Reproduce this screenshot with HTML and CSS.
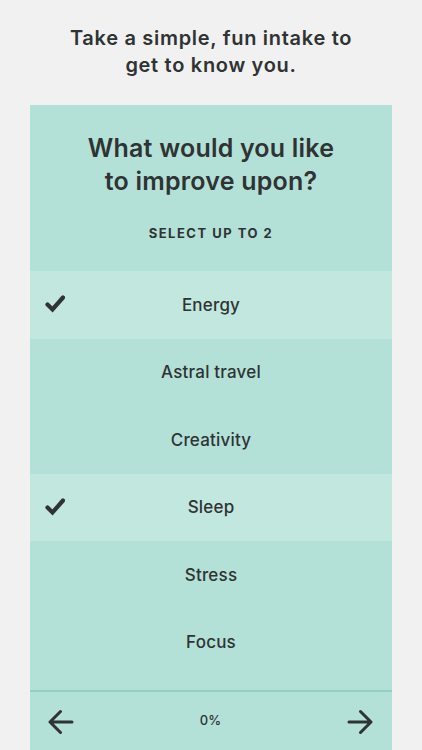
FILE: index.html
```html
<!DOCTYPE html>
<html>
<head>
<meta charset="utf-8">
<link rel="stylesheet" href="styles.css">
</head>
<body>
<div class="intro">Take a simple, fun intake to<br>get to know you.</div>
<div class="card">
  <div class="card-head">
    <h1 class="title">What would you like<br>to improve upon?</h1>
    <div class="sub">SELECT UP TO 2</div>
  </div>
  <ul class="list">
    <li class="row selected"><span class="check"><svg width="20" height="19" viewBox="0 0 20 19"><path d="M2.5 10.5 L7.5 15.5 L18 3.5" fill="none" stroke="#2f3333" stroke-width="4.2" stroke-linecap="round" stroke-linejoin="miter"/></svg></span><span class="label">Energy</span></li>
    <li class="row"><span class="check"></span><span class="label">Astral travel</span></li>
    <li class="row"><span class="check"></span><span class="label">Creativity</span></li>
    <li class="row selected"><span class="check"><svg width="20" height="19" viewBox="0 0 20 19"><path d="M2.5 10.5 L7.5 15.5 L18 3.5" fill="none" stroke="#2f3333" stroke-width="4.2" stroke-linecap="round" stroke-linejoin="miter"/></svg></span><span class="label">Sleep</span></li>
    <li class="row"><span class="check"></span><span class="label">Stress</span></li>
    <li class="row"><span class="check"></span><span class="label">Focus</span></li>
  </ul>
  <div class="footer">
    <svg class="arrow" width="26" height="26" viewBox="0 0 26 26"><path d="M24 13 H2.5 M12.5 2.5 L2 13 L12.5 23.5" fill="none" stroke="#2f3333" stroke-width="3" stroke-linecap="round" stroke-linejoin="round"/></svg>
    <span class="pct">0%</span>
    <svg class="arrow" width="26" height="26" viewBox="0 0 26 26"><path d="M2 13 H23.5 M13.5 2.5 L24 13 L13.5 23.5" fill="none" stroke="#2f3333" stroke-width="3" stroke-linecap="round" stroke-linejoin="round"/></svg>
  </div>
</div>
</body>
</html>
```

FILE: styles.css
```css
html, body {
  margin: 0;
  padding: 0;
  background: #f1f1f1;
  font-family: Inter, "Noto Sans", "Liberation Sans", sans-serif;
  color: #2f3333;
  height: 750px;
  overflow: hidden;
}
.intro {
  padding-top: 25px;
  text-align: center;
  font-size: 20px;
  line-height: 27px;
  font-weight: 600;
  letter-spacing: 0.7px;
  height: 80px;
}
.card {
  margin: 0 30px;
  background: #b3e1d8;
  width: 362px;
}
.card-head {
  height: 166px;
  box-sizing: border-box;
  padding-top: 27px;
  text-align: center;
}
.title {
  margin: 0;
  font-size: 25px;
  line-height: 33px;
  font-weight: 600;
  letter-spacing: 0.2px;
}
.sub {
  margin-top: 27px;
  font-size: 13px;
  font-weight: 700;
  letter-spacing: 1.5px;
}
.list {
  list-style: none;
  margin: 0;
  padding: 0 0 14px;
}
.row {
  height: 67.5px;
  display: grid;
  grid-template-columns: 60px 1fr 60px;
  align-items: center;
  font-size: 17px;
  font-weight: 500;
  letter-spacing: 0.2px;
}
.row.selected {
  background: #c1e7df;
}
.check {
  display: flex;
  padding-left: 15px;
  padding-bottom: 2px;
}
.label {
  text-align: center;
}
.footer {
  border-top: 2px solid #93d0c3;
  height: 60px;
  display: flex;
  align-items: center;
  justify-content: space-between;
  padding: 0 19px 2px 18px;
}
.pct {
  font-size: 13px;
  font-weight: 500;
  padding-bottom: 5px;
}
```
